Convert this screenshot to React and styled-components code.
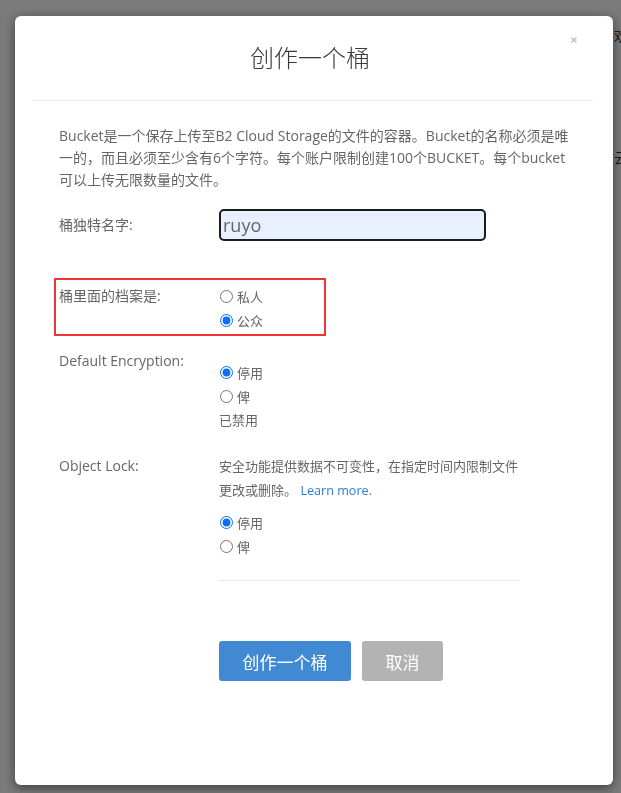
import React from "react";
import styled, { createGlobalStyle } from "styled-components";

const GlobalStyle = createGlobalStyle`
  html, body {
    margin: 0;
    padding: 0;
  }
  body {
    font-family: "Open Sans", "Noto Sans CJK SC", sans-serif;
    color: #666;
    -webkit-font-smoothing: antialiased;
  }
  * { box-sizing: border-box; }
`;

const Page = styled.div`
  min-height: 793px;
  background: #fff;
  display: grid;
  grid-template-columns: 614px 1fr;
  overflow: hidden;
`;

const PageAside = styled.div`
  grid-column: 2;
  display: flex;
  flex-direction: column;
  font-size: 14px;
  color: #333;
  white-space: nowrap;
`;

const PageText = styled.span`
  margin-top: ${(p) => p.$top}px;
  line-height: 20px;
`;

const Backdrop = styled.div`
  position: fixed;
  inset: 0;
  background: rgba(0, 0, 0, 0.52);
  display: flex;
  align-items: flex-start;
  padding: 16px 0 0 15px;
`;

const Modal = styled.div`
  width: 598px;
  height: 769px;
  background: #fff;
  border-radius: 6px;
  box-shadow: 0 3px 12px rgba(0, 0, 0, 0.5);
  display: flex;
  flex-direction: column;
`;

const Header = styled.div`
  margin: 0 20px 0 17px;
  padding: 14px 16px 25px 17px;
  border-bottom: 1px solid #e6e6e6;
  display: flex;
  align-items: flex-start;
`;

const Title = styled.h4`
  flex: 1;
  margin: 11px 0 0;
  text-align: center;
  font-size: 24px;
  font-weight: 300;
  line-height: 34px;
  color: #3a3a3a;
`;

const Close = styled.button`
  border: 0;
  background: none;
  padding: 0;
  width: 6px;
  height: 20px;
  display: flex;
  align-items: center;
  justify-content: center;
  cursor: pointer;
`;

const Body = styled.div`
  padding: 24px 20px 0 44px;
`;

const Description = styled.p`
  margin: 0;
  font-size: 14px;
  line-height: 22px;
  color: #666;
`;

const Form = styled.div`
  margin-top: 18px;
  display: flex;
  flex-direction: column;
`;

const Row = styled.div`
  display: grid;
  grid-template-columns: 160px 1fr;
  margin-top: ${(p) => p.$mt || 0}px;
`;

const Highlight = styled(Row)`
  width: 272px;
  margin-left: -5px;
  border: 2px solid #ef3434;
  padding: 4px 0 2px 3px;
`;

const Label = styled.div`
  font-size: 14px;
  line-height: ${(p) => p.$lh || 24}px;
  color: #666;
  white-space: nowrap;
`;

const TextInput = styled.input`
  width: 267px;
  height: 32px;
  border: 2px solid #1c1c1c;
  border-radius: 5px;
  background: #e8f0fe;
  padding: 0 0 0 2px;
  font-family: "Open Sans", sans-serif;
  font-size: 18px;
  color: #666;
  outline: none;
`;

const Controls = styled.div`
  display: flex;
  flex-direction: column;
  padding-top: ${(p) => p.$pt || 0}px;
`;

const RadioLine = styled.label`
  display: flex;
  align-items: center;
  height: 24px;
  font-size: 13px;
  color: #666;
`;

const Radio = styled.input.attrs({ type: "radio" })`
  width: 13px;
  height: 13px;
  margin: 0 4px 0 1px;
  accent-color: #0a6ff2;
`;

const Note = styled.div`
  font-size: 13px;
  line-height: 24px;
  color: #666;
`;

const Info = styled.div`
  width: 320px;
  font-size: 13px;
  line-height: 24px;
  color: #666;
`;

const Link = styled.a`
  color: #2a7dd0;
  text-decoration: none;
  font-size: 12.6px;
`;

const RadioGroup = styled.div`
  display: flex;
  flex-direction: column;
  margin-top: 7px;
`;

const Divider = styled.hr`
  margin: 22px 0 0 160px;
  width: 301px;
  border: 0;
  border-top: 1px solid #e6e6e6;
  height: 0;
`;

const Actions = styled.div`
  margin-top: 60px;
  padding-left: 160px;
  display: flex;
  gap: 11px;
`;

const Button = styled.button`
  height: 40px;
  width: ${(p) => p.$w}px;
  border: 0;
  border-radius: 3px;
  background: ${(p) => (p.$primary ? "#4189d3" : "#b3b3b3")};
  color: #fff;
  font-family: "Open Sans", "Noto Sans CJK SC", sans-serif;
  font-size: 17px;
  cursor: pointer;
`;

function RadioOption({ name, label, checked }) {
  return (
    <RadioLine>
      <Radio name={name} defaultChecked={checked} />
      {label}
    </RadioLine>
  );
}

export default function App() {
  return (
    <>
      <GlobalStyle />
      <Page>
        <PageAside>
          <PageText $top={26}>欢迎</PageText>
          <PageText $top={102}>云存储</PageText>
        </PageAside>
      </Page>
      <Backdrop>
        <Modal>
          <Header>
            <Title>创作一个桶</Title>
            <Close aria-label="close">
              <svg width="6" height="6" viewBox="0 0 6 6">
                <path d="M0.5 0.5 L5.5 5.5 M5.5 0.5 L0.5 5.5" stroke="#bdbdbd" strokeWidth="1.3" fill="none" />
              </svg>
            </Close>
          </Header>
          <Body>
            <Description>
              Bucket是一个保存上传至B2 Cloud Storage的文件的容器。Bucket的名称必须是唯
              <br />
              一的，而且必须至少含有6个字符。每个账户限制创建100个BUCKET。每个bucket
              <br />
              可以上传无限数量的文件。
            </Description>
            <Form>
              <Row>
                <Label $lh={32}>桶独特名字:</Label>
                <TextInput defaultValue="ruyo" />
              </Row>
              <Highlight $mt={37}>
                <Label>桶里面的档案是:</Label>
                <Controls>
                  <RadioOption name="privacy" label="私人" />
                  <RadioOption name="privacy" label="公众" checked />
                </Controls>
              </Highlight>
              <Row $mt={13}>
                <Label>Default Encryption:</Label>
                <Controls $pt={11}>
                  <RadioOption name="enc" label="停用" checked />
                  <RadioOption name="enc" label="俾" />
                  <Note>已禁用</Note>
                </Controls>
              </Row>
              <Row $mt={22}>
                <Label>Object Lock:</Label>
                <Controls>
                  <Info>
                    安全功能提供数据不可变性，在指定时间内限制文件
                    <br />
                    更改或删除。 <Link href="#">Learn more.</Link>
                  </Info>
                  <RadioGroup>
                    <RadioOption name="lock" label="停用" checked />
                    <RadioOption name="lock" label="俾" />
                  </RadioGroup>
                </Controls>
              </Row>
              <Divider />
              <Actions>
                <Button $primary $w={132}>创作一个桶</Button>
                <Button $w={81}>取消</Button>
              </Actions>
            </Form>
          </Body>
        </Modal>
      </Backdrop>
    </>
  );
}
